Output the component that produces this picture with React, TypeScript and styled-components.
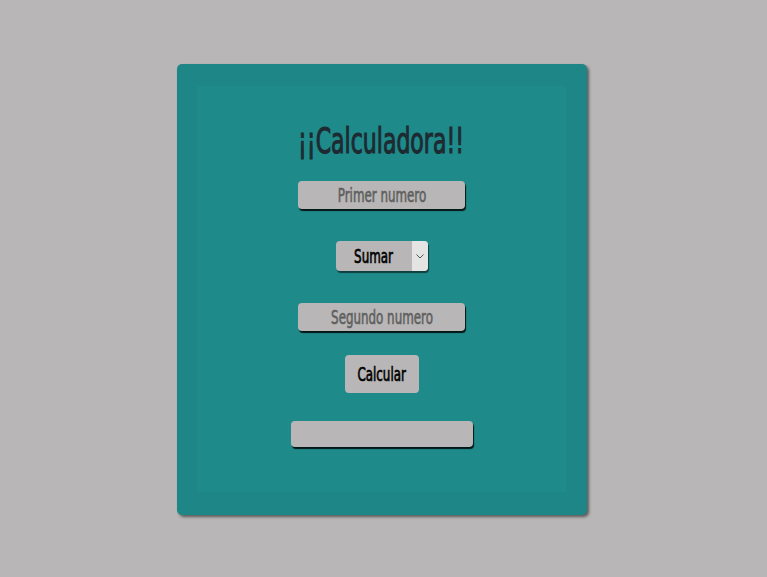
import React from "react";
import styled, { createGlobalStyle } from "styled-components";

const Global = createGlobalStyle`
  html, body { margin: 0; padding: 0; background: #b8b6b6; }
  body { font-family: "DejaVu Sans Condensed", "Liberation Sans", sans-serif; }
`;

const NARROW = 0.66;

const Page = styled.div`
  display: flex;
  justify-content: center;
  align-items: flex-start;
  padding: 64px 3px 0 0;
  height: 577px;
  box-sizing: border-box;
`;

const Card = styled.div`
  width: 410px;
  height: 451px;
  box-sizing: border-box;
  padding: 22px 21px 23px 20px;
  background: #1e8686;
  border-radius: 5px;
  box-shadow: 2px 2px 3px rgba(0, 0, 0, 0.5);
`;

const Inner = styled.div`
  height: 100%;
  background: #1f8a8a;
  display: flex;
  flex-direction: column;
  align-items: center;
`;

const Title = styled.h1`
  margin: 33px 0 0;
  font-size: 36px;
  font-weight: 400;
  line-height: 44px;
  color: #1e2a31;
  -webkit-text-stroke: 1.1px #1e2a31;
  white-space: nowrap;
`;

const Narrow = styled.span<{ $scale?: number }>`
  display: inline-block;
  white-space: nowrap;
  transform: scaleX(${(p) => p.$scale ?? NARROW});
`;

const FieldBox = styled.div<{ $top: number }>`
  width: 167px;
  height: 28px;
  margin-top: ${(p) => p.$top}px;
  border-radius: 4px;
  background: #b8b6b6;
  box-shadow: 1px 2px 1px rgba(0, 0, 0, 0.85);
  display: flex;
  justify-content: center;
  overflow: hidden;
`;

const Field = styled.input`
  flex: none;
  width: 250px;
  height: 28px;
  box-sizing: border-box;
  border: none;
  padding: 0;
  background: transparent;
  text-align: center;
  font-family: inherit;
  font-size: 20px;
  color: #222;
  -webkit-text-stroke: 0.6px currentColor;
  outline: none;
  transform: scaleX(${NARROW});
  &::placeholder {
    color: #5f5f5f;
    -webkit-text-stroke: 0.6px #5f5f5f;
  }
`;

const SelectBox = styled.div`
  display: flex;
  margin-top: 32px;
  width: 92px;
  height: 30px;
  border-radius: 4px;
  overflow: hidden;
  background: #b8b6b6;
  box-shadow: 1px 2px 1px rgba(0, 0, 0, 0.55);
`;

const SelectArea = styled.div`
  width: 76px;
  display: flex;
  justify-content: center;
  overflow: hidden;
`;

const Select = styled.select`
  appearance: none;
  flex: none;
  width: 115px;
  height: 30px;
  border: none;
  background: transparent;
  font-family: inherit;
  font-size: 20px;
  color: #000;
  -webkit-text-stroke: 0.7px #000;
  text-align: center;
  text-align-last: center;
  padding: 0;
  outline: none;
  transform: scaleX(${NARROW});
`;

const Arrow = styled.span`
  width: 16px;
  display: flex;
  align-items: center;
  justify-content: center;
  background: #e4e4e4;
`;

const Button = styled.button`
  margin-top: 24px;
  width: 74px;
  height: 38px;
  border: none;
  border-radius: 4px;
  background: #b8b6b6;
  font-family: inherit;
  font-size: 20px;
  color: #000;
  -webkit-text-stroke: 0.7px #000;
  padding: 0;
  display: flex;
  align-items: center;
  justify-content: center;
`;

const Result = styled.div`
  margin-top: 28px;
  width: 182px;
  height: 26px;
  border-radius: 4px;
  background: #b8b6b6;
  box-shadow: 1px 2px 1px rgba(0, 0, 0, 0.85);
`;

export default function App() {
  return (
    <>
      <Global />
      <Page>
        <Card>
          <Inner>
            <Title>
              <Narrow $scale={0.68}>¡¡Calculadora!!</Narrow>
            </Title>
            <FieldBox $top={18}>
              <Field placeholder="Primer numero" />
            </FieldBox>
            <SelectBox>
              <SelectArea>
                <Select defaultValue="sumar">
                  <option value="sumar">Sumar</option>
                  <option value="restar">Restar</option>
                  <option value="multiplicar">Multiplicar</option>
                  <option value="dividir">Dividir</option>
                </Select>
              </SelectArea>
              <Arrow>
                <svg width="8" height="5" viewBox="0 0 8 5">
                  <path d="M0.5 0.5 L4 4 L7.5 0.5" fill="none" stroke="#555" strokeWidth="1" />
                </svg>
              </Arrow>
            </SelectBox>
            <FieldBox $top={32}>
              <Field placeholder="Segundo numero" />
            </FieldBox>
            <Button>
              <Narrow>Calcular</Narrow>
            </Button>
            <Result />
          </Inner>
        </Card>
      </Page>
    </>
  );
}
